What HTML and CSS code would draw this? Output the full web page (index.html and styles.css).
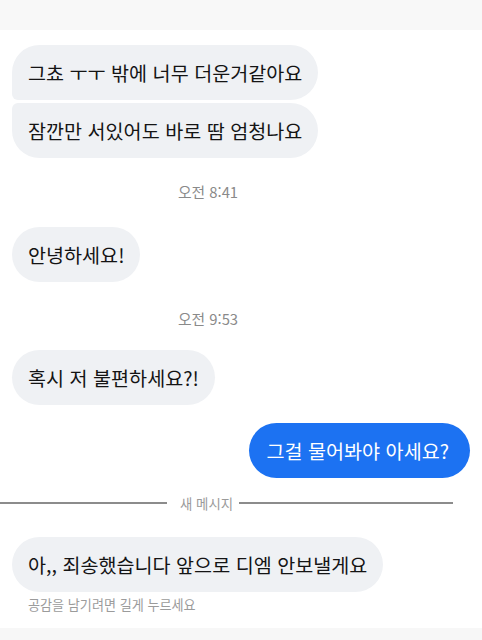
FILE: index.html
```
<!DOCTYPE html>
<html lang="ko">
<head>
  <meta charset="UTF-8" />
  <meta name="viewport" content="width=device-width, initial-scale=1" />
  <title>메시지</title>
  <link rel="stylesheet" href="styles.css">
</head>
<body>

  <div class="top-bar"></div>

  <div class="thread">
    <div class="bubble in first">그쵸 ㅜㅜ 밖에 너무 더운거같아요</div>
    <div class="bubble in last">잠깐만 서있어도 바로 땀 엄청나요</div>

    <div class="time t1">오전 8:41</div>
    <div class="bubble in solo b3">안녕하세요!</div>

    <div class="time t2">오전 9:53</div>
    <div class="bubble in solo b4">혹시 저 불편하세요?!</div>

    <div class="bubble out">그걸 물어봐야 아세요?</div>

    <div class="divider">
      <span class="line left"></span>
      <span class="divider-text">새 메시지</span>
      <span class="line right"></span>
    </div>

    <div class="bubble in solo b5">아,, 죄송했습니다 앞으로 디엠 안보낼게요</div>
    <div class="hint">공감을 남기려면 길게 누르세요</div>
  </div>

  <div class="bottom-bar"></div>

</body>
</html>
```

FILE: styles.css
```
body {
  margin: 0;
  background: #ffffff;
  font-family: "Noto Sans CJK KR", "Noto Sans", sans-serif;
  color: #111;
  height: 640px;
  display: flex;
  flex-direction: column;
  overflow: hidden;
}

.top-bar {
  height: 30px;
  background: #f8f8f8;
  flex: none;
}

.thread {
  display: flex;
  flex-direction: column;
  align-items: flex-start;
  padding: 15px 12px 0 12px;
}

/* message bubbles */
.bubble {
  font-size: 19.6px;
  line-height: 27px;
  padding: 14px 16px;
  border-radius: 28px;
  white-space: nowrap;
}

.in {
  background: #eff1f4;
  color: #141414;
}

.first {
  border-bottom-left-radius: 6px;
}

.last {
  margin-top: 3px;
  border-top-left-radius: 6px;
}

.out {
  align-self: flex-end;
  background: #1c72f2;
  color: #fff;
  padding: 14px 21px 14px 17px;
  margin-top: 18px;
}

.b3 { margin-top: 25px; }
.b4 { margin-top: 21px; }
.b5 { margin-top: 24px; }

.time {
  align-self: stretch;
  text-align: center;
  font-size: 14.8px;
  line-height: 20px;
  color: #8a8a8a;
  padding-right: 66px;
}

.t1 { margin-top: 24px; }
.t2 { margin-top: 27px; }

/* new message divider */
.divider {
  align-self: stretch;
  margin: 15px -12px 0 -12px;
  padding-right: 29px;
  height: 20px;
  display: flex;
  align-items: center;
  gap: 13px;
}

.line {
  height: 1.5px;
  background: #8c8c8c;
}

.line.left {
  flex: 0 0 167px;
}

.line.right {
  flex: 1;
  margin-left: -7px;
}

.divider-text {
  font-size: 13.4px;
  color: #9a9a9a;
}

.hint {
  margin-top: 5px;
  padding-left: 16px;
  font-size: 13.1px;
  line-height: 16px;
  color: #9b9b9b;
}

.bottom-bar {
  margin-top: auto;
  height: 12px;
  background: #f7f7f7;
  flex: none;
}
```
